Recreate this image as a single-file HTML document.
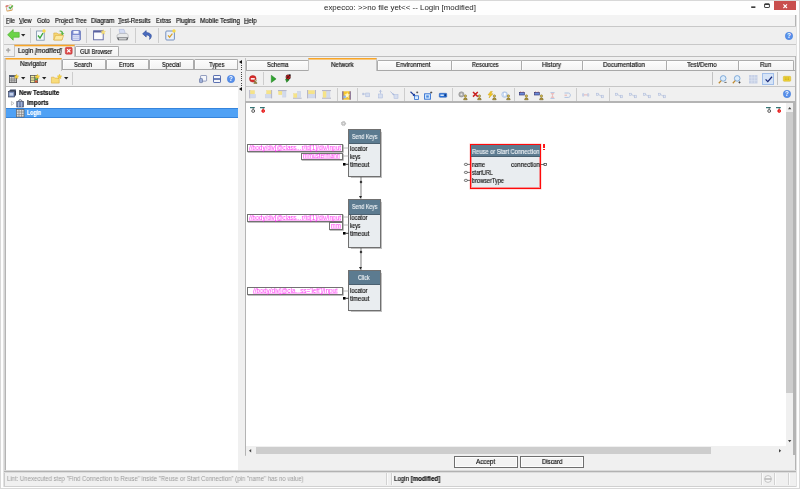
<!DOCTYPE html>
<html><head><meta charset="utf-8"><title>expecco</title>
<style>
*{box-sizing:border-box;margin:0;padding:0}
html,body{width:800px;height:489px;overflow:hidden;background:#fff}
body{position:relative;font-family:"Liberation Sans",sans-serif;font-size:6.6px;color:#0c0c0c;line-height:1}
.a{position:absolute}
.t{position:absolute;white-space:nowrap;line-height:8px;height:8px;transform-origin:0 0;will-change:transform;-webkit-text-stroke:0.16px}
.c{text-align:center}
.tab{position:absolute;background:linear-gradient(#fcfcfc,#f3f3f3);border:1px solid #acacac;border-bottom:none;border-radius:1.5px 1.5px 0 0;box-shadow:inset 0.6px 0.6px 0 #fff}
.tabsel{position:absolute;background:#f0f0f0;border-left:1px solid #c4c4c4;border-right:1px solid #c4c4c4;border-top:1px solid #f9a526;box-shadow:inset 0 1px 0 rgba(249,165,38,0.55)}
.sep{position:absolute;width:1px;background:#cdcdcd}
.hl{position:absolute;height:1px;background:#b4b4b4}
u{text-decoration-thickness:0.5px;text-underline-offset:0.3px;text-decoration-color:rgba(0,0,0,0.55)}
svg{position:absolute;overflow:visible}
.node{position:absolute;background:#e9edf0;border:1px solid #707070;box-shadow:0.5px 0.5px 0.8px rgba(0,0,0,0.25)}
.nh{position:absolute;left:0;right:0;top:0;background:#5c7b90;border-bottom:1px solid #4a6070}
.ibox{position:absolute;background:#fff;border:1px solid #727272;box-shadow:0.7px 0.7px 0 #a4a4a4}
.btn{position:absolute;background:#f3f3f3;border:1px solid #6e6e6e;box-shadow:inset 0 0 0 1px #fdfdfd}
</style></head><body>
<div class="a" style="left:0;top:0;width:800px;height:489px;background:#fefefe;border:1px solid #d8d8d8"></div>
<div class="a" style="left:3px;top:15px;width:794px;height:472px;background:#f0f0f0;border:1px solid #e2e2e2;border-top:none"></div>
<div class="t" id="title" style="left:323.80px;top:4.00px;font-size:7.3px;transform:scaleX(1.0854);color:#262626;-webkit-text-stroke:0">expecco: &gt;&gt;no file yet&lt;&lt; -- Login [modified]</div>
<svg style="left:5px;top:3.6px" width="9" height="8" viewBox="0 0 9 8"><g transform="rotate(-12 4.5 4)"><rect x="1" y="0.9" width="6.4" height="6.2" rx="1.1" fill="#d9a35c"/><rect x="1.7" y="1.3" width="5.2" height="4.7" rx="0.5" fill="#e8eefa"/><rect x="1" y="0.9" width="3" height="1.4" rx="0.6" fill="#d87070"/></g><path d="M4 3l1.3 1.5 2.6-3" fill="none" stroke="#58b040" stroke-width="1.3"/></svg>
<svg style="left:751px;top:6px" width="5" height="2" viewBox="0 0 5 2"><rect x="0.2" y="0.4" width="4.2" height="1.5" fill="#2a2a2a"/></svg>
<svg style="left:764px;top:3px" width="6" height="5" viewBox="0 0 6 5"><rect x="0.6" y="0.8" width="4.8" height="3.7" rx="0.5" fill="#fff" stroke="#2a2a2a" stroke-width="0.9"/><path d="M0.6 1.4H5.4" stroke="#2a2a2a" stroke-width="1"/></svg>
<div class="a" style="left:774px;top:1px;width:22px;height:9.4px;background:#c94f4e"></div>
<svg style="left:783.4px;top:3.6px" width="4.4" height="4.4" viewBox="0 0 4.4 4.4"><path d="M0.4 0.4L4 4M4 0.4L0.4 4" stroke="#fff" stroke-width="1.1"/></svg>
<div id="menubar" class="a" style="left:4px;top:15px;width:792px;height:11px;background:#f3f3f3"></div>
<div class="t" id="menu0" style="left:5.80px;top:17.00px;font-size:6.8px;transform:scaleX(0.8023);"><u>F</u>ile</div>
<div class="t" id="menu1" style="left:19.10px;top:17.00px;font-size:6.8px;transform:scaleX(0.8547);"><u>V</u>iew</div>
<div class="t" id="menu2" style="left:36.90px;top:17.00px;font-size:6.8px;transform:scaleX(0.8542);">Goto</div>
<div class="t" id="menu3" style="left:54.50px;top:17.00px;font-size:6.8px;transform:scaleX(0.8702);">Project Tree</div>
<div class="t" id="menu4" style="left:91.10px;top:17.00px;font-size:6.8px;transform:scaleX(0.9071);">Diagram</div>
<div class="t" id="menu5" style="left:118.40px;top:17.00px;font-size:6.8px;transform:scaleX(0.8715);"><u>T</u>est-Results</div>
<div class="t" id="menu6" style="left:155.60px;top:17.00px;font-size:6.8px;transform:scaleX(0.7786);">Extras</div>
<div class="t" id="menu7" style="left:175.60px;top:17.00px;font-size:6.8px;transform:scaleX(0.8701);">Plugins</div>
<div class="t" id="menu8" style="left:199.60px;top:17.00px;font-size:6.8px;transform:scaleX(0.9232);">Mobile Testing</div>
<div class="t" id="menu9" style="left:244.40px;top:17.00px;font-size:6.8px;transform:scaleX(0.9000);"><u>H</u>elp</div>
<div class="hl" style="left:4px;top:25.6px;width:792px;background:#c8c8c8"></div>
<div class="a" style="left:795px;top:15px;width:1px;height:11px;background:#b4b4b4"></div>
<div class="a" style="left:795px;top:27px;width:1px;height:17px;background:#b4b4b4"></div>
<div id="toolbar" class="a" style="left:4px;top:27px;width:792px;height:17px;background:#efefef"></div>
<div class="sep" style="left:29.5px;top:28px;height:15px"></div>
<div class="sep" style="left:86px;top:28px;height:15px"></div>
<div class="sep" style="left:110px;top:28px;height:15px"></div>
<div class="sep" style="left:135px;top:28px;height:15px"></div>
<div class="sep" style="left:158px;top:28px;height:15px"></div>
<svg style="left:7px;top:29px" width="13" height="12" viewBox="0 0 13 12"><path d="M6.2 0.6L0.6 5.8L6.2 11.2V8.2H12.2V3.4H6.2Z" fill="#6bd447" stroke="#4fb030" stroke-width="0.7"/></svg>
<svg style="left:21.2px;top:34.2px" width="4.4" height="2.6" viewBox="0 0 4.4 2.6"><path d="M0 0H4.4L2.2 2.6Z" fill="#2a2a2a"/></svg>
<svg style="left:36px;top:29px" width="10" height="12" viewBox="0 0 10 12"><rect x="0.6" y="2" width="7.6" height="9.2" fill="#f4f8fc" stroke="#7890a8" stroke-width="0.8"/><path d="M2 6.5l2 2.6L7 4" fill="none" stroke="#3aa63a" stroke-width="1.4"/><circle cx="8" cy="2" r="1.7" fill="#f7d84a"/></svg>
<svg style="left:53px;top:29px" width="12" height="12" viewBox="0 0 12 12"><path d="M0.8 4H4l1 1H9V11H0.8Z" fill="#f6d775" stroke="#d9a93a" stroke-width="0.6"/><path d="M0.8 11L2.6 6.4H10.6L9 11Z" fill="#fbe9a0" stroke="#d9a93a" stroke-width="0.6"/><path d="M5.5 2.2C7.5 0.6 10 1.4 10.2 4.2L11.4 4L9.6 6.2L7.6 4.4L8.9 4.3C8.6 2.8 7 2.2 5.5 2.2Z" fill="#5cb648"/></svg>
<svg style="left:71px;top:30px" width="10" height="11" viewBox="0 0 10 11"><rect x="0.6" y="0.6" width="8.8" height="9.6" rx="0.8" fill="#7b8bd0" stroke="#5f6fb8" stroke-width="0.8"/><rect x="2.4" y="0.9" width="5.2" height="2.8" fill="#f2f4fc"/><rect x="1.6" y="5.2" width="6.8" height="4.6" fill="#eef0fa"/><path d="M1.6 6.8H8.4M1.6 8.4H8.4" stroke="#8c9ad8" stroke-width="0.6"/></svg>
<svg style="left:93px;top:30px" width="12" height="10.4" viewBox="0 0 12 10.4"><rect x="0.6" y="0.8" width="9.6" height="9" fill="#fbfbfd" stroke="#5a62a0" stroke-width="0.9"/><rect x="0.6" y="0.8" width="9.6" height="1.7" fill="#5a62a0"/><path d="M10.2 -0.4L10.9 1.2L12.6 1.4L11.3 2.5L11.7 4.2L10.2 3.3L8.7 4.2L9.1 2.5L7.8 1.4L9.5 1.2Z" fill="#f9e27a" stroke="#e6c850" stroke-width="0.3"/></svg>
<svg style="left:116px;top:29px" width="13" height="12" viewBox="0 0 13 12"><path d="M3 0.4H8L9.4 4.8H4Z" fill="#d4dcf4" stroke="#a0acd0" stroke-width="0.5"/><path d="M1 6L4 4.4H11L12.2 6V9H1Z" fill="#e8e9ea" stroke="#9a9ca0" stroke-width="0.5"/><path d="M1 8.4H12.2L11.4 11.2H2Z" fill="#5a5c60"/><path d="M2.6 9.2H10.8L10.4 10.6H3Z" fill="#f4f4f4"/></svg>
<svg style="left:142px;top:30px" width="11" height="10" viewBox="0 0 11 10"><path d="M4.2 0.6L0.6 3.8L4.2 7V5C7 4.8 8.4 6.4 7.6 9.4C10.8 6.6 9.6 2.6 4.2 2.6Z" fill="#4a6cc0" stroke="#2e4a96" stroke-width="0.6"/></svg>
<svg style="left:165px;top:29px" width="11" height="12" viewBox="0 0 11 12"><rect x="0.8" y="2" width="8.6" height="9" rx="1" fill="#e9f0fa" stroke="#6a86b8" stroke-width="0.9"/><path d="M3 6.4l1.6 1.8L7.4 4.6" fill="none" stroke="#d9a02a" stroke-width="1.2"/><circle cx="9" cy="2" r="1.7" fill="#f7d84a"/></svg>
<svg style="left:785px;top:31.5px" width="8" height="8" viewBox="0 0 8 8"><circle cx="4" cy="4" r="3.7" fill="#5890ea" stroke="#3f78d8" stroke-width="0.5"/><text x="4" y="6.3" font-size="6.4" font-weight="bold" fill="#fff" text-anchor="middle" font-family="Liberation Sans,sans-serif">?</text></svg>
<div class="hl" style="left:4px;top:43.6px;width:792px;background:#c8c8c8"></div>
<div id="toptabs" class="a" style="left:4px;top:45px;width:792px;height:12px;background:#f0f0f0"></div>
<div class="hl" style="left:4px;top:56px;width:792px;background:#bdbdbd"></div>
<svg style="left:6.4px;top:48px" width="4.4" height="4.4" viewBox="0 0 4.4 4.4"><path d="M2.2 0V4.4M0 2.2H4.4" stroke="#a2a2a2" stroke-width="1.2"/></svg>
<div class="tabsel" style="left:14px;top:45px;width:61px;height:12px;box-shadow:inset 0 1px 0 rgba(249,165,38,0.3),0 -1px 0 rgba(249,165,38,0.25)"></div>
<div class="t" id="logintab" style="left:18.00px;top:47.00px;font-size:6.7px;transform:scaleX(0.9273);">Login <i>[modified]</i></div>
<svg style="left:65px;top:47px" width="7.5" height="7.5" viewBox="0 0 7.5 7.5"><rect x="0.3" y="0.3" width="6.9" height="6.9" rx="1.3" fill="#dd4848" stroke="#b83030" stroke-width="0.5"/><path d="M2.1 2.1L5.4 5.4M5.4 2.1L2.1 5.4" stroke="#fff" stroke-width="1.2"/></svg>
<div class="tab" style="left:74.6px;top:46px;width:44.4px;height:10px"></div>
<div class="t" id="guitab" style="left:80.00px;top:48.00px;font-size:6.7px;transform:scaleX(0.8411);">GUI Browser</div>
<div id="left" class="a" style="left:4px;top:57px;width:235px;height:414px;background:#f0f0f0"></div>
<div class="a" style="left:4px;top:58px;width:1px;height:413px;background:#d4d4d4"></div>
<div class="a" style="left:5px;top:58px;width:1px;height:413px;background:#b4b4b4"></div>
<div class="a" style="left:4px;top:472px;width:1px;height:14px;background:#cccccc"></div>
<div class="tabsel" style="left:5px;top:58px;width:57px;height:13px"></div>
<div class="t" id="navtab" style="left:20.30px;top:60.00px;font-size:6.7px;transform:scaleX(0.9293);">Navigator</div>
<div class="tab" style="left:61.8px;top:59px;width:43.8px;height:10px"></div>
<div class="t" id="ltSearch" style="left:74.00px;top:61.00px;font-size:6.7px;transform:scaleX(0.8489);">Search</div>
<div class="tab" style="left:105.6px;top:59px;width:43.0px;height:10px"></div>
<div class="t" id="ltErrors" style="left:119.40px;top:61.00px;font-size:6.7px;transform:scaleX(0.8343);">Errors</div>
<div class="tab" style="left:148.6px;top:59px;width:45.400000000000006px;height:10px"></div>
<div class="t" id="ltSpecial" style="left:162.00px;top:61.00px;font-size:6.7px;transform:scaleX(0.8479);">Special</div>
<div class="tab" style="left:194px;top:59px;width:43.599999999999994px;height:10px"></div>
<div class="t" id="ltTypes" style="left:208.60px;top:61.00px;font-size:6.7px;transform:scaleX(0.8630);">Types</div>
<div class="hl" style="left:62px;top:69px;width:176px;background:#a8a8a8"></div>
<svg style="left:9px;top:75px" width="8" height="8" viewBox="0 0 8 8"><rect x="0.4" y="0.4" width="7.2" height="7.2" fill="#d8d8d8" stroke="#555" stroke-width="0.8"/><rect x="0.4" y="0.4" width="7.2" height="1.6" fill="#4a5a78"/><path d="M2.8 2V7.6M5.2 2V7.6M0.4 4H7.6M0.4 5.8H7.6" stroke="#666" stroke-width="0.6"/></svg>
<svg style="left:14px;top:73.5px" width="5" height="5" viewBox="-2.5 -2.5 5 5"><path d="M0 -2.4L0.7 -0.7L2.4 -0.6L1.1 0.5L1.5 2.2L0 1.3L-1.5 2.2L-1.1 0.5L-2.4 -0.6L-0.7 -0.7Z" fill="#f6d23c" stroke="#d8ae20" stroke-width="0.3"/></svg>
<svg style="left:20.5px;top:77px" width="4.4" height="2.6" viewBox="0 0 4.4 2.6"><path d="M0 0H4.4L2.2 2.6Z" fill="#222"/></svg>
<svg style="left:30px;top:75px" width="8" height="8" viewBox="0 0 8 8"><rect x="0.4" y="0.4" width="7.2" height="7.2" fill="#f3ee9a" stroke="#555" stroke-width="0.8"/><path d="M0.4 2.8H7.6M0.4 5.2H7.6M4.6 0.4V7.6" stroke="#555" stroke-width="0.7"/><rect x="5" y="3.2" width="2.4" height="1.8" fill="#4aa04a"/><rect x="5" y="5.6" width="2.4" height="1.8" fill="#d85030"/></svg>
<svg style="left:35px;top:73.5px" width="5" height="5" viewBox="-2.5 -2.5 5 5"><path d="M0 -2.4L0.7 -0.7L2.4 -0.6L1.1 0.5L1.5 2.2L0 1.3L-1.5 2.2L-1.1 0.5L-2.4 -0.6L-0.7 -0.7Z" fill="#f6d23c" stroke="#d8ae20" stroke-width="0.3"/></svg>
<svg style="left:42px;top:77px" width="4.4" height="2.6" viewBox="0 0 4.4 2.6"><path d="M0 0H4.4L2.2 2.6Z" fill="#222"/></svg>
<svg style="left:51px;top:75.5px" width="9" height="7.5" viewBox="0 0 9 7.5"><path d="M0.4 1.2H3l0.8 0.9H8.2V7.1H0.4Z" fill="#f8dc7c" stroke="#dcae40" stroke-width="0.6"/></svg>
<svg style="left:57px;top:73.5px" width="5" height="5" viewBox="-2.5 -2.5 5 5"><path d="M0 -2.4L0.7 -0.7L2.4 -0.6L1.1 0.5L1.5 2.2L0 1.3L-1.5 2.2L-1.1 0.5L-2.4 -0.6L-0.7 -0.7Z" fill="#f6d23c" stroke="#d8ae20" stroke-width="0.3"/></svg>
<svg style="left:63.5px;top:77px" width="4.4" height="2.6" viewBox="0 0 4.4 2.6"><path d="M0 0H4.4L2.2 2.6Z" fill="#222"/></svg>
<div class="sep" style="left:72px;top:72px;height:13px"></div>
<svg style="left:199px;top:74.5px" width="8" height="8" viewBox="0 0 8 8"><rect x="1.6" y="0.5" width="6" height="5.6" rx="0.6" fill="#f4f6fb" stroke="#6a7aa8" stroke-width="0.7"/><rect x="0.5" y="3.6" width="3" height="4" rx="0.5" fill="#9fb0d8" stroke="#5a6a98" stroke-width="0.6"/></svg>
<svg style="left:213px;top:74.5px" width="8" height="8" viewBox="0 0 8 8"><rect x="0.5" y="0.5" width="7" height="7" rx="0.6" fill="#f4f6fb" stroke="#4a62a8" stroke-width="0.9"/><rect x="0.5" y="3.2" width="7" height="1.6" fill="#4a62a8"/></svg>
<svg style="left:227px;top:74.5px" width="8" height="8" viewBox="0 0 8 8"><circle cx="4" cy="4" r="3.7" fill="#5890ea" stroke="#3f78d8" stroke-width="0.5"/><text x="4" y="6.3" font-size="6.4" font-weight="bold" fill="#fff" text-anchor="middle" font-family="Liberation Sans,sans-serif">?</text></svg>
<div class="hl" style="left:6px;top:86px;width:232px;background:#b6b6b6"></div>
<div class="a" style="left:6px;top:87px;width:232px;height:383px;background:#fff"></div>
<div class="a" style="left:6px;top:108px;width:232px;height:9.6px;background:#4fa1f5;border-top:0.7px solid #3584dc;border-bottom:0.7px solid #3584dc"></div>
<div class="t" id="tr1" style="left:18.50px;top:89.00px;font-size:6.7px;transform:scaleX(0.9048);font-weight:bold">New Testsuite</div>
<div class="t" id="tr2" style="left:26.90px;top:99.00px;font-size:6.7px;transform:scaleX(0.8805);font-weight:bold">Imports</div>
<div class="t" id="tr3" style="left:26.90px;top:109.00px;font-size:6.7px;transform:scaleX(0.7883);font-weight:bold;color:#fff">Login</div>
<svg style="left:8px;top:88.5px" width="8.5" height="8.5" viewBox="0 0 8.5 8.5"><path d="M0.5 2.6L2.4 0.6H8L6.4 2.6Z" fill="#3a4660"/><path d="M6.4 2.6L8 0.6V6L6.4 8Z" fill="#2a3450"/><rect x="0.5" y="2.6" width="5.9" height="5.4" fill="#7d92c0" stroke="#2a3450" stroke-width="0.6"/><rect x="1.6" y="4" width="3.6" height="2.6" fill="#c6d2ec"/></svg>
<svg style="left:11px;top:101.3px" width="3.4" height="4.6" viewBox="0 0 3.4 4.6"><path d="M0.4 0.4L3 2.3L0.4 4.2Z" fill="#fff" stroke="#a0a0a0" stroke-width="0.6"/></svg>
<svg style="left:16px;top:98.5px" width="8.5" height="8.5" viewBox="0 0 8.5 8.5"><rect x="0.8" y="2.6" width="6.6" height="5.4" fill="#6d82b0" stroke="#2a3450" stroke-width="0.6"/><path d="M2.6 2.6V8M5.4 2.6V8" stroke="#c6d2ec" stroke-width="0.7"/><path d="M2.4 2.6C2.4 0.2 6 0.2 6 2.6" fill="none" stroke="#2a3450" stroke-width="0.8"/></svg>
<svg style="left:16px;top:108.6px" width="8.5" height="8.5" viewBox="0 0 8.5 8.5"><rect x="0.5" y="0.5" width="7.5" height="7.5" fill="#e0e0e0" stroke="#606060" stroke-width="0.7"/><path d="M3 0.5V8M5.6 0.5V8M0.5 3H8M0.5 5.6H8" stroke="#707070" stroke-width="0.6"/></svg>
<svg style="left:239.4px;top:59.6px" width="3" height="4" viewBox="0 0 3 4"><path d="M3 0V4L0 2Z" fill="#111"/></svg>
<svg style="left:239.4px;top:86.6px" width="3" height="4" viewBox="0 0 3 4"><path d="M3 0V4L0 2Z" fill="#111"/></svg>
<div class="a" style="left:240.6px;top:64.5px;width:1.2px;height:21px;background:repeating-linear-gradient(#444 0 1px,#f0f0f0 1px 2.2px)"></div>
<div id="right" class="a" style="left:245px;top:57px;width:551px;height:414px;background:#f0f0f0"></div>
<div class="a" style="left:245px;top:58px;width:1px;height:398px;background:#c2c2c2"></div>
<div class="a" style="left:795px;top:56px;width:0.8px;height:415px;background:#b4b4b4"></div>
<div class="tab" style="left:246px;top:60px;width:63px;height:10px"></div>
<div class="t" id="rtSche" style="left:267.00px;top:61.00px;font-size:6.7px;transform:scaleX(0.8799);">Schema</div>
<div class="tabsel" style="left:308px;top:58px;width:68.5px;height:13px"></div>
<div class="t" id="rtNetw" style="left:331.00px;top:61.00px;font-size:6.7px;transform:scaleX(0.9213);">Network</div>
<div class="tab" style="left:376.5px;top:60px;width:75.5px;height:10px"></div>
<div class="t" id="rtEnvi" style="left:395.60px;top:61.00px;font-size:6.7px;transform:scaleX(0.9162);">Environment</div>
<div class="tab" style="left:451px;top:60px;width:71px;height:10px"></div>
<div class="t" id="rtReso" style="left:472.40px;top:61.00px;font-size:6.7px;transform:scaleX(0.8321);">Resources</div>
<div class="tab" style="left:521px;top:60px;width:62px;height:10px"></div>
<div class="t" id="rtHist" style="left:541.60px;top:61.00px;font-size:6.7px;transform:scaleX(0.9129);">History</div>
<div class="tab" style="left:582px;top:60px;width:85px;height:10px"></div>
<div class="t" id="rtDocu" style="left:603.00px;top:61.00px;font-size:6.7px;transform:scaleX(0.9337);">Documentation</div>
<div class="tab" style="left:666px;top:60px;width:73px;height:10px"></div>
<div class="t" id="rtTest" style="left:687.40px;top:61.00px;font-size:6.7px;transform:scaleX(0.9259);">Test/Demo</div>
<div class="tab" style="left:738px;top:60px;width:55.5px;height:10px"></div>
<div class="t" id="rtRun" style="left:760.00px;top:61.00px;font-size:6.7px;transform:scaleX(0.9282);">Run</div>
<div class="hl" style="left:246px;top:70px;width:62px;background:#a8a8a8"></div>
<div class="hl" style="left:376.5px;top:70px;width:418px;background:#a8a8a8"></div>
<div class="hl" style="left:246px;top:86.3px;width:549px;background:#c6c6c6"></div>
<div class="sep" style="left:263px;top:72px;height:13px"></div>
<svg style="left:249px;top:74.5px" width="9" height="9" viewBox="0 0 9 9"><circle cx="3.8" cy="3.8" r="3.3" fill="#d82a2a" stroke="#a81c1c" stroke-width="0.5"/><rect x="1.8" y="3.1" width="4" height="1.5" fill="#fff"/><circle cx="6.4" cy="5.6" r="1" fill="#d8c890" stroke="#605020" stroke-width="0.4"/><path d="M4.8 8.4C4.8 6.4 8 6.4 8 8.4Z" fill="#a89040" stroke="#504010" stroke-width="0.4"/></svg>
<svg style="left:271.2px;top:75px" width="5.4" height="7.8" viewBox="0 0 5.4 7.8"><path d="M0.3 0.3L5.1 3.9L0.3 7.5Z" fill="#2fa52f" stroke="#1c7a1c" stroke-width="0.5"/></svg>
<svg style="left:284px;top:74px" width="7" height="9" viewBox="0 0 7 9"><path d="M1.2 5.2L4 3L5.4 6L2.6 8.8Z" fill="#2e8a2e"/><circle cx="4.2" cy="3" r="2.3" fill="#d82020" stroke="#201010" stroke-width="0.5"/><path d="M2.6 1.4L5.8 4.6" stroke="#201010" stroke-width="0.6"/><circle cx="5.9" cy="1.1" r="0.9" fill="#201010"/><circle cx="3.4" cy="3.4" r="0.5" fill="#201010"/><circle cx="4.8" cy="2.2" r="0.5" fill="#201010"/></svg>
<div class="sep" style="left:712.4px;top:72px;height:13px;background:#c2c2c2"></div>
<div class="sep" style="left:777px;top:72px;height:13px;background:#c2c2c2"></div>
<svg style="left:718px;top:74.5px" width="9" height="9" viewBox="0 0 9 9"><circle cx="5.2" cy="3.4" r="2.8" fill="#dcecfb" stroke="#6a9ad0" stroke-width="0.8"/><path d="M3.2 5.6L0.8 8.2" stroke="#c08a30" stroke-width="1.3"/><path d="M6.4 7.4H8.6" stroke="#333" stroke-width="0.7"/></svg>
<svg style="left:732px;top:74.5px" width="9" height="9" viewBox="0 0 9 9"><circle cx="5.2" cy="3.4" r="2.8" fill="#dcecfb" stroke="#6a9ad0" stroke-width="0.8"/><path d="M3.2 5.6L0.8 8.2" stroke="#c08a30" stroke-width="1.3"/><path d="M6.4 7.4H8.6M7.5 6.3V8.5" stroke="#333" stroke-width="0.7"/></svg>
<svg style="left:749px;top:75px" width="8.5" height="8.5" viewBox="0 0 8.5 8.5"><rect x="0" y="0" width="8.5" height="8.5" fill="#c6d0e6"/><path d="M2.8 0V8.5M5.7 0V8.5M0 2.8H8.5M0 5.7H8.5" stroke="#dfe5f2" stroke-width="0.6"/></svg>
<div class="a" style="left:762px;top:72.6px;width:12px;height:12.6px;background:#d6e4f7;border:1px solid #a2bfea"></div>
<svg style="left:764.5px;top:76px" width="7.5" height="6.5" viewBox="0 0 7.5 6.5"><path d="M0.6 3.4L2.8 5.6L7 0.8" fill="none" stroke="#1a2a7a" stroke-width="1.3"/></svg>
<svg style="left:782.6px;top:75.6px" width="8" height="5.6" viewBox="0 0 8 5.6"><rect x="0.3" y="0.3" width="7.4" height="5" rx="0.8" fill="#ecd034" stroke="#d4b428" stroke-width="0.5"/><path d="M1.8 2H6.2M1.8 3.4H6.2" stroke="#b89818" stroke-width="0.6" stroke-dasharray="1 0.6"/></svg>
<div class="sep" style="left:336.6px;top:88px;height:13px"></div>
<div class="sep" style="left:356.6px;top:88px;height:13px"></div>
<div class="sep" style="left:404.4px;top:88px;height:13px"></div>
<div class="sep" style="left:452.4px;top:88px;height:13px"></div>
<div class="sep" style="left:514px;top:88px;height:13px"></div>
<div class="sep" style="left:576.4px;top:88px;height:13px"></div>
<div class="sep" style="left:609px;top:88px;height:13px"></div>
<svg style="left:248.8px;top:90px" width="9" height="9" viewBox="0 0 9 9" opacity="0.82"><rect x="0.3" y="0" width="0.9" height="8.4" fill="#9a9ab4"/><rect x="1.4" y="0.5" width="4.2" height="3.4" fill="#f8e272" stroke="#ecd060" stroke-width="0.3"/><rect x="1.4" y="4.4" width="5.2" height="3.6" fill="#ccd6ec" stroke="#b4c0de" stroke-width="0.3"/></svg>
<svg style="left:263.6px;top:90px" width="9" height="9" viewBox="0 0 9 9" opacity="0.82"><rect x="7.2" y="0" width="0.9" height="8.4" fill="#9a9ab4"/><rect x="2.6" y="0.5" width="4.4" height="3.4" fill="#f8e272" stroke="#ecd060" stroke-width="0.3"/><rect x="1.2" y="4.4" width="5.8" height="3.6" fill="#ccd6ec" stroke="#b4c0de" stroke-width="0.3"/></svg>
<svg style="left:277.7px;top:90px" width="9" height="9" viewBox="0 0 9 9" opacity="0.82"><rect x="0" y="0.2" width="8.6" height="0.9" fill="#9a9ab4"/><rect x="0.6" y="1.3" width="3.4" height="3.4" fill="#f8e272" stroke="#ecd060" stroke-width="0.3"/><rect x="4.6" y="1.3" width="3.4" height="5.8" fill="#ccd6ec" stroke="#b4c0de" stroke-width="0.3"/></svg>
<svg style="left:292.6px;top:90px" width="9" height="9" viewBox="0 0 9 9" opacity="0.82"><rect x="0" y="7.7" width="8.6" height="0.9" fill="#9a9ab4"/><rect x="0.6" y="3.6" width="3.4" height="3.9" fill="#f8e272" stroke="#ecd060" stroke-width="0.3"/><rect x="4.4" y="1.2" width="3.4" height="6.3" fill="#ccd6ec" stroke="#b4c0de" stroke-width="0.3"/></svg>
<svg style="left:307px;top:90px" width="9" height="9" viewBox="0 0 9 9" opacity="0.82"><rect x="0.2" y="0" width="0.9" height="8.4" fill="#9a9ab4"/><rect x="7.9" y="0" width="0.9" height="8.4" fill="#9a9ab4"/><rect x="1.4" y="0.5" width="6.2" height="3.4" fill="#f8e272" stroke="#ecd060" stroke-width="0.3"/><rect x="1.4" y="4.4" width="6.2" height="3.6" fill="#ccd6ec" stroke="#b4c0de" stroke-width="0.3"/></svg>
<svg style="left:322px;top:90px" width="9" height="9" viewBox="0 0 9 9" opacity="0.82"><rect x="0" y="0.2" width="9" height="0.9" fill="#9a9ab4"/><rect x="0" y="7.7" width="9" height="0.9" fill="#9a9ab4"/><rect x="1" y="1.4" width="3.2" height="6" fill="#f8e272" stroke="#ecd060" stroke-width="0.3"/><rect x="4.8" y="1.4" width="3.2" height="6" fill="#ccd6ec" stroke="#b4c0de" stroke-width="0.3"/></svg>
<svg style="left:342px;top:90.5px" width="9" height="9" viewBox="0 0 9 9"><rect x="0.3" y="0.3" width="8.4" height="8.4" fill="#f6c62e"/><rect x="0.3" y="0.3" width="1.1" height="8.4" fill="#6858b0"/><rect x="7.6" y="0.3" width="1.1" height="8.4" fill="#6858b0"/><rect x="1.4" y="4.6" width="3" height="2.6" fill="#8ab4f0"/><path d="M5.2 1.2L6 3.2L8 3.6L6.4 4.8L6.9 6.9L5.2 5.8L3.5 6.9L4 4.8L2.4 3.6L4.4 3.2Z" fill="#fff8c8"/></svg>
<svg style="left:361.6px;top:92px" width="8" height="6" viewBox="0 0 8 6"><path d="M1.2 0.8V3.2M0 2H3.6" stroke="#a9b9dc" stroke-width="0.8" fill="none"/><rect x="3.8" y="1" width="3.8" height="3.8" fill="#d6deef" stroke="#a9b9dc" stroke-width="0.5"/></svg>
<svg style="left:377.6px;top:90px" width="5" height="8.6" viewBox="0 0 5 8.6"><path d="M2.5 0.4V3.6M1.2 1.6L2.5 0.3L3.8 1.6" stroke="#a9b9dc" stroke-width="0.8" fill="none"/><rect x="0.5" y="4" width="4" height="4" fill="#d6deef" stroke="#a9b9dc" stroke-width="0.5"/></svg>
<svg style="left:390px;top:90.6px" width="8.4" height="8" viewBox="0 0 8.4 8"><path d="M0.4 0.6L4 4" stroke="#a9b9dc" stroke-width="0.9"/><path d="M4.4 4.4L2.2 3.8L3.8 2.2Z" fill="#a9b9dc"/><rect x="4" y="3.6" width="4" height="3.8" fill="#d6deef" stroke="#a9b9dc" stroke-width="0.5"/></svg>
<svg style="left:409.5px;top:90.5px" width="9" height="9" viewBox="0 0 9 9"><path d="M0.5 0.8L4.6 4.6" stroke="#1a3a9a" stroke-width="1.2"/><path d="M5.4 5.4L2.6 4.8L4.8 2.6Z" fill="#1a3a9a"/><rect x="4.6" y="4.8" width="3.8" height="3.6" fill="#d8ecff" stroke="#2a6ad0" stroke-width="0.8"/><path d="M7.2 0.4V2.4M6.2 1.4H8.2" stroke="#222" stroke-width="0.6"/></svg>
<svg style="left:424px;top:90.5px" width="9" height="9" viewBox="0 0 9 9"><rect x="0.6" y="2.8" width="5.8" height="5.4" fill="#d8ecff" stroke="#2a6ad0" stroke-width="0.9"/><rect x="2.2" y="4.4" width="2.6" height="2.2" fill="#4a8ae0"/><path d="M7.2 0.4V2.6M6.1 1.5H8.3" stroke="#222" stroke-width="0.6"/></svg>
<svg style="left:438.5px;top:93px" width="8" height="4.5" viewBox="0 0 8 4.5"><rect x="0.3" y="0.3" width="7.4" height="3.9" rx="0.6" fill="#2a78e0" stroke="#1a4aa0" stroke-width="0.5"/><rect x="1.4" y="1.6" width="3.4" height="1.2" fill="#fff"/><rect x="5.6" y="1.2" width="1.2" height="2" fill="#0a2a6a"/></svg>
<svg style="left:458px;top:91px" width="10" height="9" viewBox="0 0 10 9"><circle cx="3.4" cy="3.4" r="2.6" fill="#b0b0b0" stroke="#808080" stroke-width="0.5"/><circle cx="3.4" cy="3.4" r="0.9" fill="#e8e8e8"/><circle cx="7.4" cy="5" r="1.2" fill="#d8c050" stroke="#5a4a10" stroke-width="0.4"/><path d="M5.6 8.8C5.6 6.2 9.2 6.2 9.2 8.8Z" fill="#b89a30" stroke="#4a3a08" stroke-width="0.4"/></svg>
<svg style="left:472px;top:91px" width="10" height="9" viewBox="0 0 10 9"><path d="M1 1L5.8 5.6M5.8 1L1 5.6" stroke="#c82020" stroke-width="1.5"/><circle cx="7.4" cy="5" r="1.2" fill="#d8c050" stroke="#5a4a10" stroke-width="0.4"/><path d="M5.6 8.8C5.6 6.2 9.2 6.2 9.2 8.8Z" fill="#b89a30" stroke="#4a3a08" stroke-width="0.4"/></svg>
<svg style="left:486.5px;top:91px" width="10" height="9" viewBox="0 0 10 9"><path d="M3.6 0.4L1 4H3L2 7L6 2.8H3.8L5.4 0.4Z" fill="#f4c820" stroke="#c89a10" stroke-width="0.4"/><circle cx="7.4" cy="5" r="1.2" fill="#d8c050" stroke="#5a4a10" stroke-width="0.4"/><path d="M5.6 8.8C5.6 6.2 9.2 6.2 9.2 8.8Z" fill="#b89a30" stroke="#4a3a08" stroke-width="0.4"/></svg>
<svg style="left:500.5px;top:91px" width="10" height="9" viewBox="0 0 10 9"><circle cx="3.6" cy="3.6" r="2.9" fill="#cfe0f6" stroke="#9ab4dc" stroke-width="0.5"/><rect x="2.6" y="1.8" width="2.4" height="3.2" fill="#fff" stroke="#9ab4dc" stroke-width="0.3"/><circle cx="7.4" cy="5" r="1.2" fill="#d8c050" stroke="#5a4a10" stroke-width="0.4"/><path d="M5.6 8.8C5.6 6.2 9.2 6.2 9.2 8.8Z" fill="#b89a30" stroke="#4a3a08" stroke-width="0.4"/></svg>
<svg style="left:519px;top:91px" width="10" height="9" viewBox="0 0 10 9"><rect x="0.5" y="1.4" width="4.8" height="2.6" fill="#6a8ad8" stroke="#2a2a6a" stroke-width="0.6"/><path d="M1.6 1.4V0.5M4.2 1.4V0.5" stroke="#b03030" stroke-width="0.6"/><circle cx="7.4" cy="5" r="1.2" fill="#d8c050" stroke="#5a4a10" stroke-width="0.4"/><path d="M5.6 8.8C5.6 6.2 9.2 6.2 9.2 8.8Z" fill="#b89a30" stroke="#4a3a08" stroke-width="0.4"/></svg>
<svg style="left:533.5px;top:91px" width="10" height="9" viewBox="0 0 10 9"><rect x="0.5" y="1.4" width="4.8" height="2.6" fill="#6a8ad8" stroke="#2a2a6a" stroke-width="0.6"/><path d="M1.6 1.4V0.5M4.2 1.4V0.5" stroke="#b03030" stroke-width="0.6"/><circle cx="7.4" cy="5" r="1.2" fill="#d8c050" stroke="#5a4a10" stroke-width="0.4"/><path d="M5.6 8.8C5.6 6.2 9.2 6.2 9.2 8.8Z" fill="#b89a30" stroke="#4a3a08" stroke-width="0.4"/></svg>
<svg style="left:549.5px;top:91.5px" width="5" height="7" viewBox="0 0 5 7" opacity="0.8"><path d="M0.4 0.5H4.6M0.4 6.5H4.6" stroke="#9ab4dc" stroke-width="0.8"/><path d="M1 1L2.5 3.5L4 1M1 6L2.5 3.5L4 6" fill="#f0b0b0" stroke="#d8a0a0" stroke-width="0.4"/></svg>
<svg style="left:564px;top:91.5px" width="7" height="6.5" viewBox="0 0 7 6.5" opacity="0.85"><path d="M0.5 1H4.4C7 1 7 5.4 4.4 5.4H0.5" fill="none" stroke="#9ab4dc" stroke-width="0.9"/><path d="M0.5 3.2H3" stroke="#e09090" stroke-width="0.8"/></svg>
<svg style="left:582px;top:93px" width="7.4" height="4" viewBox="0 0 7.4 4" opacity="0.85"><rect x="0.4" y="0.5" width="1.5" height="2.8" rx="0.5" fill="#c8d2ec" stroke="#a0b0d4" stroke-width="0.4"/><rect x="5.4" y="0.5" width="1.5" height="2.8" rx="0.5" fill="#c8d2ec" stroke="#a0b0d4" stroke-width="0.4"/><path d="M2 1.9H5.4" stroke="#e89a9a" stroke-width="0.8"/></svg>
<svg style="left:596px;top:92px" width="8" height="6.5" viewBox="0 0 8 6.5" opacity="0.85"><rect x="0.4" y="1.2" width="2" height="2.2" fill="#dfe6f4" stroke="#a0b0d4" stroke-width="0.5"/><rect x="5.4" y="3.2" width="2" height="2.6" fill="#dfe6f4" stroke="#a0b0d4" stroke-width="0.5"/><path d="M2.4 2.3L5.4 4.4" stroke="#a0b0d4" stroke-width="0.7"/></svg>
<svg style="left:615px;top:92px" width="8" height="6.5" viewBox="0 0 8 6.5" opacity="0.85"><rect x="0.4" y="1.2" width="2" height="2.2" fill="#dfe6f4" stroke="#a0b0d4" stroke-width="0.5"/><rect x="5.4" y="3.2" width="2" height="2.6" fill="#dfe6f4" stroke="#a0b0d4" stroke-width="0.5"/><path d="M2.4 2.3L5.4 4.4" stroke="#a0b0d4" stroke-width="0.7"/></svg>
<svg style="left:629px;top:92px" width="8" height="6.5" viewBox="0 0 8 6.5" opacity="0.85"><rect x="0.4" y="1.2" width="2" height="2.2" fill="#dfe6f4" stroke="#a0b0d4" stroke-width="0.5"/><rect x="5.4" y="3.2" width="2" height="2.6" fill="#dfe6f4" stroke="#a0b0d4" stroke-width="0.5"/><path d="M2.4 2.3L5.4 4.4" stroke="#a0b0d4" stroke-width="0.7"/></svg>
<svg style="left:643px;top:92px" width="8" height="6.5" viewBox="0 0 8 6.5" opacity="0.85"><rect x="0.4" y="1.2" width="2" height="2.2" fill="#dfe6f4" stroke="#a0b0d4" stroke-width="0.5"/><rect x="5.4" y="3.2" width="2" height="2.6" fill="#dfe6f4" stroke="#a0b0d4" stroke-width="0.5"/><path d="M2.4 2.3L5.4 4.4" stroke="#a0b0d4" stroke-width="0.7"/></svg>
<svg style="left:657.6px;top:92px" width="8" height="6.5" viewBox="0 0 8 6.5" opacity="0.85"><rect x="0.4" y="1.2" width="2" height="2.2" fill="#dfe6f4" stroke="#a0b0d4" stroke-width="0.5"/><rect x="5.4" y="3.2" width="2" height="2.6" fill="#dfe6f4" stroke="#a0b0d4" stroke-width="0.5"/><path d="M2.4 2.3L5.4 4.4" stroke="#a0b0d4" stroke-width="0.7"/></svg>
<svg style="left:783px;top:90px" width="8" height="8" viewBox="0 0 8 8"><circle cx="4" cy="4" r="3.7" fill="#5890ea" stroke="#3f78d8" stroke-width="0.5"/><text x="4" y="6.3" font-size="6.4" font-weight="bold" fill="#fff" text-anchor="middle" font-family="Liberation Sans,sans-serif">?</text></svg>
<div class="a" style="left:245px;top:101px;width:550.6px;height:354.4px;background:#b4b4b4"></div>
<div class="a" style="left:246.2px;top:102.7px;width:547px;height:351.6px;background:#fff"></div>
<div class="a" style="left:785.8px;top:102.7px;width:7.4px;height:343.5px;background:#f0f0f0"></div>
<div class="a" style="left:786.2px;top:112.4px;width:6.6px;height:281px;background:#cdcdcd"></div>
<svg style="left:787.8px;top:106.6px" width="3.4" height="2.2" viewBox="0 0 3.4 2.2"><path d="M0 2.2L1.7 0L3.4 2.2Z" fill="#444"/></svg>
<svg style="left:787.8px;top:439.8px" width="3.4" height="2.2" viewBox="0 0 3.4 2.2"><path d="M0 0L1.7 2.2L3.4 0Z" fill="#444"/></svg>
<div class="a" style="left:246.2px;top:446.4px;width:547px;height:8.3px;background:#f0f0f0"></div>
<div class="a" style="left:255.5px;top:446.8px;width:455px;height:7px;background:#cdcdcd"></div>
<svg style="left:249.4px;top:448.8px" width="2.2" height="3.4" viewBox="0 0 2.2 3.4"><path d="M2.2 0L0 1.7L2.2 3.4Z" fill="#444"/></svg>
<svg style="left:778.8px;top:448.8px" width="2.2" height="3.4" viewBox="0 0 2.2 3.4"><path d="M0 0L2.2 1.7L0 3.4Z" fill="#444"/></svg>
<svg style="left:250px;top:106.5px" width="6" height="6" viewBox="0 0 6 6"><path d="M0 0.7H4.8" stroke="#0a5a5a" stroke-width="1"/><path d="M3.2 0.7V2.6" stroke="#222" stroke-width="0.6"/><circle cx="3.2" cy="4" r="1.45" fill="#fff" stroke="#3a3a3a" stroke-width="0.8"/><circle cx="3.2" cy="4" r="0.45" fill="#888"/></svg>
<svg style="left:259.5px;top:106.5px" width="6" height="6" viewBox="0 0 6 6"><path d="M0 0.7H4.8" stroke="#0a5a5a" stroke-width="1"/><path d="M3.2 0.7V2.6" stroke="#222" stroke-width="0.6"/><circle cx="3.2" cy="4" r="1.45" fill="#e81818" stroke="#e81818" stroke-width="0.8"/><circle cx="3.2" cy="4" r="0.45" fill="#fff"/></svg>
<svg style="left:765.5px;top:106.5px" width="6" height="6" viewBox="0 0 6 6"><path d="M0 0.7H4.8" stroke="#0a5a5a" stroke-width="1"/><path d="M3.2 0.7V2.6" stroke="#222" stroke-width="0.6"/><circle cx="3.2" cy="4" r="1.45" fill="#fff" stroke="#3a3a3a" stroke-width="0.8"/><circle cx="3.2" cy="4" r="0.45" fill="#888"/></svg>
<svg style="left:775.5px;top:106.5px" width="6" height="6" viewBox="0 0 6 6"><path d="M0 0.7H4.8" stroke="#0a5a5a" stroke-width="1"/><path d="M3.2 0.7V2.6" stroke="#222" stroke-width="0.6"/><circle cx="3.2" cy="4" r="1.45" fill="#e81818" stroke="#e81818" stroke-width="0.8"/><circle cx="3.2" cy="4" r="0.45" fill="#fff"/></svg>
<svg style="left:341px;top:121px" width="5" height="5" viewBox="0 0 5 5"><circle cx="2.5" cy="2.5" r="2.1" fill="#c9c9c9" stroke="#a4a4a4" stroke-width="0.8" stroke-dasharray="1 0.6"/><circle cx="2.5" cy="2.5" r="0.6" fill="#eee"/></svg>
<div class="node" style="left:348px;top:129px;width:32.8px;height:48.4px"><div class="nh" style="height:14px"></div></div>
<div class="t" id="n1t" style="left:352.00px;top:133.00px;font-size:6.4px;transform:scaleX(0.8214);color:#eef2f5">Send Keys</div>
<div class="t" id="n1locator" style="left:349.90px;top:145.00px;font-size:6.6px;transform:scaleX(0.8840);color:#111">locator</div>
<svg style="left:342.6px;top:147.1px" width="5.4" height="2" viewBox="0 0 5.4 2"><path d="M0 1H5.4" stroke="#b4b4b4" stroke-width="0.9"/></svg>
<div class="t" id="n1keys" style="left:349.90px;top:153.00px;font-size:6.6px;transform:scaleX(0.7558);color:#111">keys</div>
<svg style="left:342.6px;top:155.1px" width="5.4" height="2" viewBox="0 0 5.4 2"><path d="M0 1H5.4" stroke="#b4b4b4" stroke-width="0.9"/></svg>
<div class="t" id="n1timeout" style="left:349.90px;top:161.00px;font-size:6.6px;transform:scaleX(0.8971);color:#111">timeout</div>
<svg style="left:342.6px;top:163.0px" width="5.4" height="2.6" viewBox="0 0 5.4 2.6"><rect x="0" y="0" width="2.6" height="2.6" fill="#000"/><path d="M2.6 1.3H5.4" stroke="#000" stroke-width="0.8"/></svg>
<div class="node" style="left:348px;top:199px;width:32.8px;height:48.8px"><div class="nh" style="height:14.6px"></div></div>
<div class="t" id="n2t" style="left:352.00px;top:203.00px;font-size:6.4px;transform:scaleX(0.8214);color:#eef2f5">Send Keys</div>
<div class="t" id="n2locator" style="left:349.90px;top:214.00px;font-size:6.6px;transform:scaleX(0.8840);color:#111">locator</div>
<svg style="left:342.6px;top:216.45px" width="5.4" height="2" viewBox="0 0 5.4 2"><path d="M0 1H5.4" stroke="#b4b4b4" stroke-width="0.9"/></svg>
<div class="t" id="n2keys" style="left:349.90px;top:222.00px;font-size:6.6px;transform:scaleX(0.7558);color:#111">keys</div>
<svg style="left:342.6px;top:224.4px" width="5.4" height="2" viewBox="0 0 5.4 2"><path d="M0 1H5.4" stroke="#b4b4b4" stroke-width="0.9"/></svg>
<div class="t" id="n2timeout" style="left:349.90px;top:230.00px;font-size:6.6px;transform:scaleX(0.8971);color:#111">timeout</div>
<svg style="left:342.6px;top:232.29999999999998px" width="5.4" height="2.6" viewBox="0 0 5.4 2.6"><rect x="0" y="0" width="2.6" height="2.6" fill="#000"/><path d="M2.6 1.3H5.4" stroke="#000" stroke-width="0.8"/></svg>
<div class="node" style="left:348px;top:270px;width:32.8px;height:40.6px"><div class="nh" style="height:13.8px"></div></div>
<div class="t" id="n3t" style="left:358.10px;top:274.00px;font-size:6.4px;transform:scaleX(0.8298);color:#eef2f5">Click</div>
<div class="t" id="n3locator" style="left:349.90px;top:287.00px;font-size:6.6px;transform:scaleX(0.8840);color:#111">locator</div>
<svg style="left:342.6px;top:289.6px" width="5.4" height="2" viewBox="0 0 5.4 2"><path d="M0 1H5.4" stroke="#b4b4b4" stroke-width="0.9"/></svg>
<div class="t" id="n3timeout" style="left:349.90px;top:295.00px;font-size:6.6px;transform:scaleX(0.8971);color:#111">timeout</div>
<svg style="left:342.6px;top:297.3px" width="5.4" height="2.6" viewBox="0 0 5.4 2.6"><rect x="0" y="0" width="2.6" height="2.6" fill="#000"/><path d="M2.6 1.3H5.4" stroke="#000" stroke-width="0.8"/></svg>
<div class="ibox" style="left:247.3px;top:144.3px;width:95.30000000000001px;height:7.599999999999994px"></div>
<div class="t" id="ib1" style="left:249.25px;top:144.00px;font-size:6.5px;transform:scaleX(0.9284);color:rgba(255,0,240,0.82);-webkit-text-stroke:0;text-decoration:underline;text-decoration-thickness:0.5px;text-underline-offset:0.2px;text-decoration-color:rgba(255,8,244,0.3);text-decoration-skip-ink:none">//body/div[@class...r/td[1]/div/input</div>
<div class="ibox" style="left:301.2px;top:152.6px;width:41.400000000000034px;height:7.300000000000011px"></div>
<div class="t" id="ib2" style="left:303.00px;top:152.00px;font-size:6.5px;transform:scaleX(0.8906);color:rgba(255,0,240,0.82);-webkit-text-stroke:0;text-decoration:underline;text-decoration-thickness:0.5px;text-underline-offset:0.2px;text-decoration-color:rgba(255,8,244,0.3);text-decoration-skip-ink:none">mmustermann</div>
<div class="ibox" style="left:247.3px;top:213.6px;width:95.30000000000001px;height:8.300000000000011px"></div>
<div class="t" id="ib3" style="left:249.25px;top:214.00px;font-size:6.5px;transform:scaleX(0.9284);color:rgba(255,0,240,0.82);-webkit-text-stroke:0;text-decoration:underline;text-decoration-thickness:0.5px;text-underline-offset:0.2px;text-decoration-color:rgba(255,8,244,0.3);text-decoration-skip-ink:none">//body/div[@class...r/td[1]/div/input</div>
<div class="ibox" style="left:328.8px;top:222.4px;width:13.800000000000011px;height:7.5px"></div>
<div class="t" id="ib4" style="left:330.50px;top:222.00px;font-size:6.5px;transform:scaleX(0.8761);color:rgba(255,0,240,0.82);-webkit-text-stroke:0;text-decoration:underline;text-decoration-thickness:0.5px;text-underline-offset:0.2px;text-decoration-color:rgba(255,8,244,0.3);text-decoration-skip-ink:none">mm</div>
<div class="ibox" style="left:247.3px;top:286.6px;width:95.30000000000001px;height:8.299999999999955px"></div>
<div class="t" id="ib5" style="left:252.50px;top:287.00px;font-size:6.5px;transform:scaleX(0.9483);color:rgba(255,0,240,0.82);-webkit-text-stroke:0;text-decoration:underline;text-decoration-thickness:0.5px;text-underline-offset:0.2px;text-decoration-color:rgba(255,8,244,0.3);text-decoration-skip-ink:none">//body/div[@cla...ss='left']/input</div>
<svg style="left:359.5px;top:177.4px" width="2" height="21.599999999999994" viewBox="0 0 2 21.599999999999994"><path d="M1 0V21.599999999999994" stroke="#444" stroke-width="0.7"/></svg>
<div class="a" style="left:359.5px;top:180.8px;width:2px;height:2px;background:#222;transform:rotate(45deg)"></div>
<svg style="left:359.0px;top:196.4px" width="3" height="2.6" viewBox="0 0 3 2.6"><path d="M0 0H3L1.5 2.6Z" fill="#222"/></svg>
<svg style="left:359.5px;top:247.8px" width="2" height="22.19999999999999" viewBox="0 0 2 22.19999999999999"><path d="M1 0V22.19999999999999" stroke="#444" stroke-width="0.7"/></svg>
<div class="a" style="left:359.5px;top:251.20000000000002px;width:2px;height:2px;background:#222;transform:rotate(45deg)"></div>
<svg style="left:359.0px;top:267.4px" width="3" height="2.6" viewBox="0 0 3 2.6"><path d="M0 0H3L1.5 2.6Z" fill="#222"/></svg>
<div class="a" style="left:470px;top:144px;width:71.4px;height:44.8px;background:#e9edf0;border:1px solid #ff0a0a;box-shadow:inset 0 0 0 1px rgba(255,10,10,0.4),0 0 0 0.5px rgba(255,10,10,0.25)"></div>
<div class="a" style="left:471.3px;top:145.3px;width:68.8px;height:12.2px;background:#5c7b90;border-bottom:1px solid #4a6070"></div>
<div class="t" id="reuset" style="left:471.90px;top:148.00px;font-size:6.4px;transform:scaleX(0.8963);color:#eef2f5">Reuse or Start Connection</div>
<div class="t" id="rpname" style="left:472.00px;top:161.00px;font-size:6.6px;transform:scaleX(0.7879);color:#111">name</div>
<svg style="left:464.2px;top:163.4px" width="6" height="2.8" viewBox="0 0 6 2.8"><rect x="0.4" y="0.4" width="3" height="2" rx="0.9" fill="#fff" stroke="#333" stroke-width="0.7"/><path d="M3.4 1.4H6" stroke="#333" stroke-width="0.7"/></svg>
<div class="t" id="rpstartURL" style="left:472.00px;top:169.00px;font-size:6.6px;transform:scaleX(0.7976);color:#111">startURL</div>
<svg style="left:464.2px;top:171.2px" width="6" height="2.8" viewBox="0 0 6 2.8"><rect x="0.4" y="0.4" width="3" height="2" rx="0.9" fill="#fff" stroke="#333" stroke-width="0.7"/><path d="M3.4 1.4H6" stroke="#333" stroke-width="0.7"/></svg>
<div class="t" id="rpbrowserType" style="left:472.00px;top:177.00px;font-size:6.6px;transform:scaleX(0.8477);color:#111">browserType</div>
<svg style="left:464.2px;top:179.4px" width="6" height="2.8" viewBox="0 0 6 2.8"><rect x="0.4" y="0.4" width="3" height="2" rx="0.9" fill="#fff" stroke="#333" stroke-width="0.7"/><path d="M3.4 1.4H6" stroke="#333" stroke-width="0.7"/></svg>
<div class="t" id="connpin" style="left:510.60px;top:161.00px;font-size:6.6px;transform:scaleX(0.9026);color:#111">connection</div>
<svg style="left:541.4px;top:163.4px" width="6" height="3" viewBox="0 0 6 3"><path d="M0 1.5H3" stroke="#333" stroke-width="0.7"/><rect x="3" y="0.4" width="2.4" height="2.2" fill="#fff" stroke="#333" stroke-width="0.7"/></svg>
<div class="a" style="left:543.4px;top:144.2px;width:1.5px;height:3.6px;background:#ff1a1a"></div><div class="a" style="left:543.4px;top:148.6px;width:1.5px;height:1.3px;background:#ff1a1a"></div>
<div class="btn" style="left:454.3px;top:456.2px;width:63.4px;height:11.6px"></div>
<div class="btn" style="left:520px;top:456.2px;width:63.6px;height:11.6px"></div>
<div class="t" id="bacc" style="left:476.30px;top:458.00px;font-size:6.7px;transform:scaleX(0.9387);">Accept</div>
<div class="t" id="bdis" style="left:541.70px;top:458.00px;font-size:6.7px;transform:scaleX(0.8954);">Discard</div>
<div class="hl" style="left:4px;top:471px;width:792px;background:#b2b2b2;box-shadow:0 1px 0 #dcdcdc,0 -1px 0 #dadada"></div>
<div id="status" class="a" style="left:5px;top:473px;width:791px;height:13px;background:#f0f0f0"></div>
<div class="t" id="lint" style="left:7.00px;top:475.00px;font-size:6.5px;transform:scaleX(0.9199);color:#9a9a9a;-webkit-text-stroke:0">Lint: Unexecuted step "Find Connection to Reuse" inside "Reuse or Start Connection" (pin "name" has no value)</div>
<div class="sep" style="left:385.5px;top:473px;height:12px;background:#d2d2d2;box-shadow:1px 0 0 #fafafa"></div>
<div class="sep" style="left:390.6px;top:473px;height:12px;background:#d2d2d2;box-shadow:1px 0 0 #fafafa"></div>
<div class="sep" style="left:761px;top:473px;height:12px;background:#d2d2d2;box-shadow:1px 0 0 #fafafa"></div>
<div class="sep" style="left:774.4px;top:473px;height:12px;background:#d2d2d2;box-shadow:1px 0 0 #fafafa"></div>
<div class="sep" style="left:788px;top:473px;height:12px;background:#d2d2d2;box-shadow:1px 0 0 #fafafa"></div>
<div class="t" id="stlogin" style="left:393.80px;top:475.00px;font-size:6.6px;transform:scaleX(0.9269);">Login <b>[modified]</b></div>
<svg style="left:764px;top:475px" width="8" height="8" viewBox="0 0 8 8"><circle cx="4" cy="4" r="3.4" fill="#f6f6f6" stroke="#b8b8b8" stroke-width="0.8"/><path d="M0.8 4H7.2" stroke="#a8a8a8" stroke-width="1.2"/></svg>
<div class="hl" style="left:4px;top:485.6px;width:792px;background:#d0d0d0"></div>
</body></html>
